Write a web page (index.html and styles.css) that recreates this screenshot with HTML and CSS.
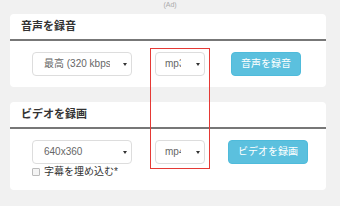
FILE: index.html
```html
<!DOCTYPE html>
<html lang="ja">
<head>
<meta charset="utf-8">
<link rel="stylesheet" href="styles.css">
</head>
<body>
<div class="ad">(Ad)</div>
<section class="card">
  <div class="card-head">音声を録音</div>
  <div class="card-body">
    <div class="row">
      <div class="select sel-wide"><span class="sel-text">最高 (320 kbps)</span><span class="caret"></span></div>
      <div class="select sel-narrow"><span class="sel-text">mp3</span><span class="caret"></span></div>
      <div class="btn-cell"><button class="btn">音声を録音</button></div>
    </div>
  </div>
</section>
<section class="card card-video">
  <div class="card-head">ビデオを録画</div>
  <div class="card-body">
    <div class="row">
      <div class="select sel-wide"><span class="sel-text">640x360</span><span class="caret"></span></div>
      <div class="select sel-narrow"><span class="sel-text">mp4</span><span class="caret"></span></div>
      <div class="btn-cell"><button class="btn">ビデオを録画</button></div>
      <label class="check"><span class="box"></span>字幕を埋め込む*</label>
    </div>
  </div>
</section>
<div class="annotation"></div>
</body>
</html>
```
FILE: styles.css
```css
html, body {
  margin: 0;
  padding: 0;
}
body {
  background: #f1f1f1;
  font-family: "Liberation Sans", "Noto Sans CJK JP", sans-serif;
  color: #333;
  width: 340px;
  height: 206px;
  overflow: hidden;
}
.ad {
  height: 14px;
  font-size: 7px;
  line-height: 10px;
  color: #aaa;
  text-align: center;
}
.card {
  background: #fff;
  margin: 0 14px 15px 10px;
  border-radius: 4px;
}
.card-head {
  height: 25px;
  line-height: 25px;
  padding-left: 11px;
  font-size: 11px;
  font-weight: bold;
  color: #333;
  border-bottom: 2px solid #777;
}
.card-body {
  padding: 11px 22px 11px 22px;
}
.card-video .card-body {
  padding-bottom: 13px;
}
.row {
  display: grid;
  grid-template-columns: 100px 50px 1fr;
  column-gap: 23px;
  align-items: center;
}
.select {
  box-sizing: border-box;
  height: 24px;
  border: 1px solid #ddd;
  border-radius: 4px;
  background: #fff;
  display: flex;
  align-items: center;
  font-size: 10px;
  color: #666;
}
.sel-text {
  flex: none;
  display: block;
  white-space: nowrap;
  overflow: hidden;
  line-height: 14px;
}
.sel-wide {
  padding-left: 11px;
  padding-right: 4px;
}
.sel-wide .sel-text {
  width: 66px;
}
.sel-narrow {
  padding-left: 9px;
  padding-right: 4px;
}
.sel-narrow .sel-text {
  width: 16px;
}
.caret {
  margin-left: auto;
  width: 0;
  height: 0;
  border-left: 2px solid transparent;
  border-right: 2px solid transparent;
  border-top: 3px solid #333;
}
.btn-cell {
  display: flex;
  justify-content: center;
}
.btn {
  flex: none;
  box-sizing: border-box;
  height: 24px;
  padding: 0 9px;
  border: 1px solid #4fbbdb;
  border-radius: 4px;
  background: #5bc0de;
  color: #fff;
  font-family: inherit;
  font-size: 10px;
  line-height: 22px;
  white-space: nowrap;
}
.check {
  grid-column: 1 / 3;
  margin-top: 2px;
  display: flex;
  align-items: center;
  height: 11px;
  font-size: 10px;
  line-height: 11px;
  color: #333;
}
.box {
  box-sizing: border-box;
  width: 8px;
  height: 8px;
  border: 1px solid #bbb;
  border-radius: 1px;
  background: #f4f4f4;
  margin-right: 4px;
}
.annotation {
  position: absolute;
  left: 150px;
  top: 48px;
  width: 60px;
  height: 121px;
  box-sizing: border-box;
  border: 1px solid #e53935;
}
```
